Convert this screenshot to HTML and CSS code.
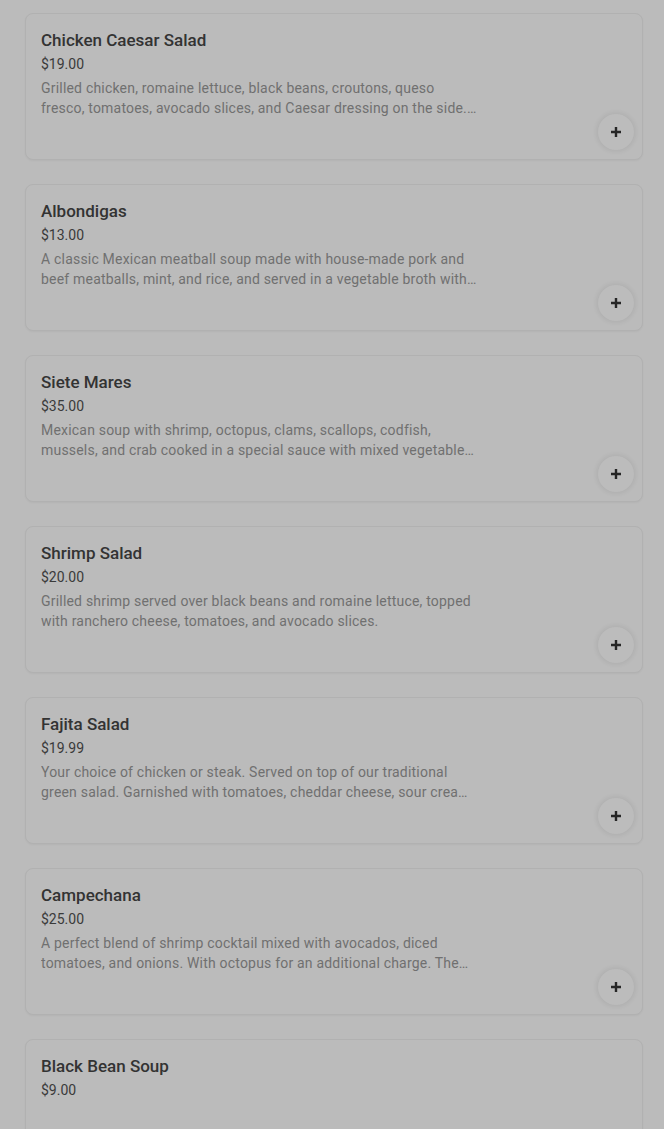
FILE: index.html
```html
<!DOCTYPE html>
<html lang="en">
<head>
<meta charset="utf-8">
<title>Menu</title>
<link rel="stylesheet" href="styles.css">
</head>
<body>
<main class="list">
  <article class="card">
    <div class="info">
      <h3 class="name">Chicken Caesar Salad</h3>
      <div class="price">$19.00</div>
      <p class="desc">Grilled chicken, romaine lettuce, black beans, croutons, queso fresco, tomatoes, avocado slices, and Caesar dressing on the side. Served with tortilla chips.</p>
    </div>
    <button class="add" aria-label="Add"><svg viewBox="0 0 12 12" width="12" height="12"><path d="M6 1v10M1 6h10" stroke="currentColor" stroke-width="2.4" fill="none"/></svg></button>
  </article>
  <article class="card">
    <div class="info">
      <h3 class="name">Albondigas</h3>
      <div class="price">$13.00</div>
      <p class="desc">A classic Mexican meatball soup made with house-made pork and beef meatballs, mint, and rice, and served in a vegetable broth with carrots, zucchini and potatoes.</p>
    </div>
    <button class="add" aria-label="Add"><svg viewBox="0 0 12 12" width="12" height="12"><path d="M6 1v10M1 6h10" stroke="currentColor" stroke-width="2.4" fill="none"/></svg></button>
  </article>
  <article class="card">
    <div class="info">
      <h3 class="name">Siete Mares</h3>
      <div class="price">$35.00</div>
      <p class="desc">Mexican soup with shrimp, octopus, clams, scallops, codfish, mussels, and crab cooked in a special sauce with mixed vegetables and herbs.</p>
    </div>
    <button class="add" aria-label="Add"><svg viewBox="0 0 12 12" width="12" height="12"><path d="M6 1v10M1 6h10" stroke="currentColor" stroke-width="2.4" fill="none"/></svg></button>
  </article>
  <article class="card">
    <div class="info">
      <h3 class="name">Shrimp Salad</h3>
      <div class="price">$20.00</div>
      <p class="desc">Grilled shrimp served over black beans and romaine lettuce, topped with ranchero cheese, tomatoes, and avocado slices.</p>
    </div>
    <button class="add" aria-label="Add"><svg viewBox="0 0 12 12" width="12" height="12"><path d="M6 1v10M1 6h10" stroke="currentColor" stroke-width="2.4" fill="none"/></svg></button>
  </article>
  <article class="card">
    <div class="info">
      <h3 class="name">Fajita Salad</h3>
      <div class="price">$19.99</div>
      <p class="desc">Your choice of chicken or steak. Served on top of our traditional green salad. Garnished with tomatoes, cheddar cheese, sour cream and guacamole.</p>
    </div>
    <button class="add" aria-label="Add"><svg viewBox="0 0 12 12" width="12" height="12"><path d="M6 1v10M1 6h10" stroke="currentColor" stroke-width="2.4" fill="none"/></svg></button>
  </article>
  <article class="card">
    <div class="info">
      <h3 class="name">Campechana</h3>
      <div class="price">$25.00</div>
      <p class="desc">A perfect blend of shrimp cocktail mixed with avocados, diced tomatoes, and onions. With octopus for an additional charge. The perfect seafood appetizer.</p>
    </div>
    <button class="add" aria-label="Add"><svg viewBox="0 0 12 12" width="12" height="12"><path d="M6 1v10M1 6h10" stroke="currentColor" stroke-width="2.4" fill="none"/></svg></button>
  </article>
  <article class="card">
    <div class="info">
      <h3 class="name">Black Bean Soup</h3>
      <div class="price">$9.00</div>
    </div>
  </article>
</main>
</body>
</html>
```
FILE: styles.css
```css
html, body {
  margin: 0;
  padding: 0;
  background: #bbbbbb;
  height: 1129px;
  overflow: hidden;
}
body {
  font-family: Roboto, "Liberation Sans", Arial, sans-serif;
  color: #2e2e2e;
}
.list {
  display: flex;
  flex-direction: column;
  gap: 24px;
  padding: 13px 21px 0 25px;
}
.card {
  display: flex;
  align-items: stretch;
  box-sizing: border-box;
  height: 147px;
  flex-shrink: 0;
  border: 1px solid #b1b1b1;
  border-radius: 8px;
  box-shadow: 0 1px 2px rgba(0,0,0,0.04);
  padding: 14px 8px 9px 15px;
  background: #bbbbbb;
}
.info {
  flex: 1;
  min-width: 0;
}
.name {
  margin: 0;
  font-size: 17px;
  line-height: 24px;
  font-weight: 500;
  color: #333333;
}
.price {
  margin-top: 2px;
  font-size: 14px;
  line-height: 20px;
  color: #3a3a3a;
}
.desc {
  margin: 4px 0 0;
  max-width: 436px;
  font-size: 14px;
  line-height: 20px;
  letter-spacing: 0.2px;
  color: #707070;
  display: -webkit-box;
  -webkit-line-clamp: 2;
  -webkit-box-orient: vertical;
  overflow: hidden;
}
.add {
  align-self: flex-end;
  width: 36px;
  height: 36px;
  border-radius: 50%;
  border: none;
  padding: 0;
  background: #bcbcbc;
  color: #262626;
  display: flex;
  align-items: center;
  justify-content: center;
  box-shadow: 0 0 4px 2px rgba(0,0,0,0.06);
}
```
